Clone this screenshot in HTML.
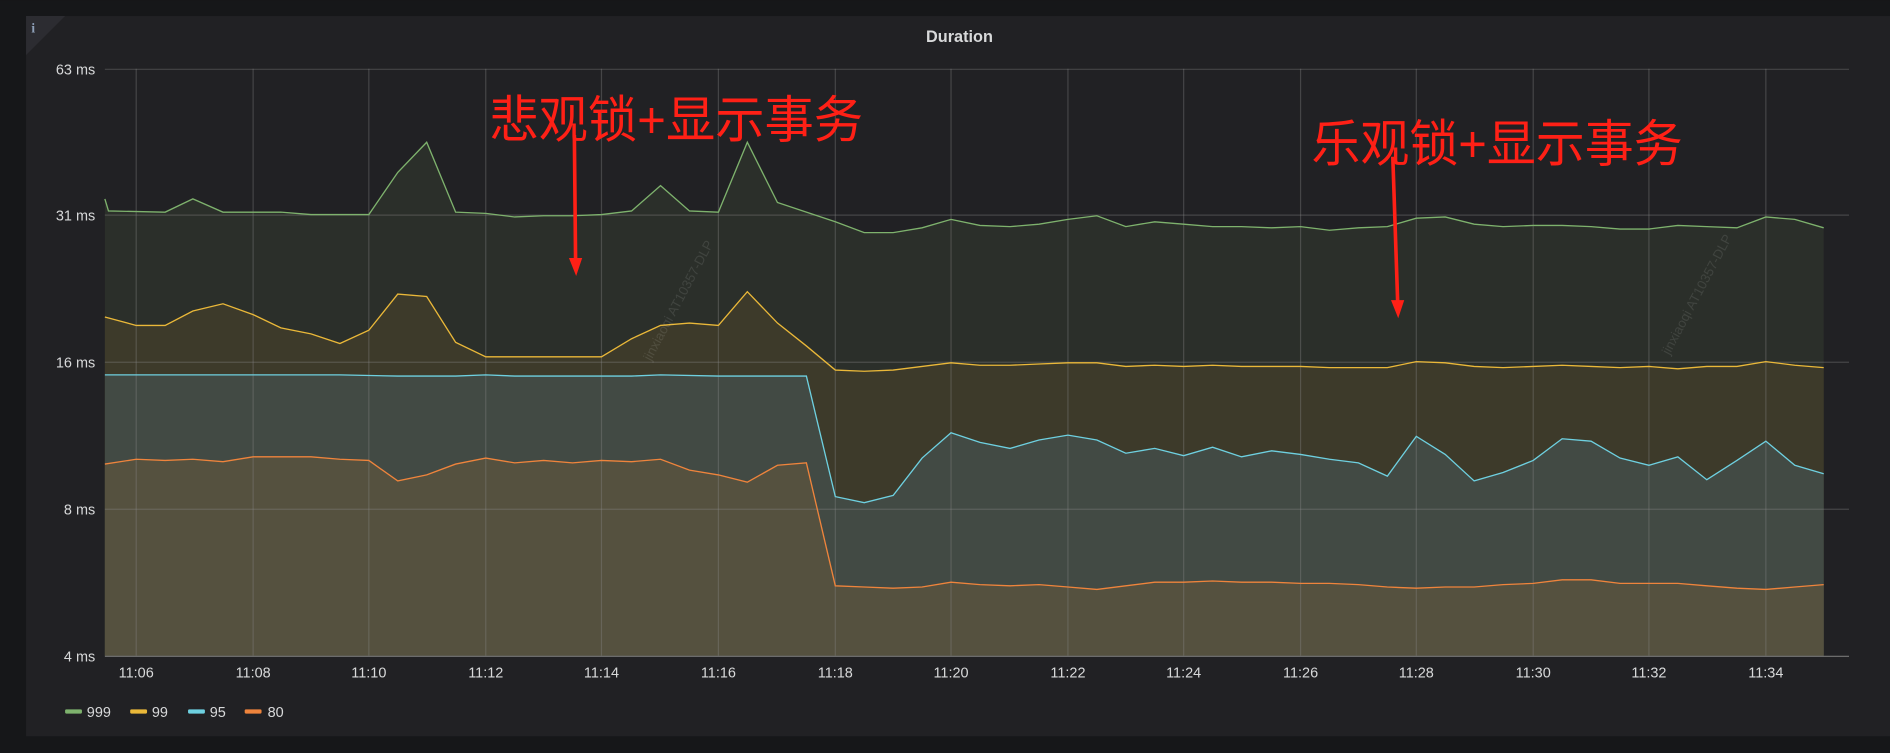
<!DOCTYPE html>
<html><head><meta charset="utf-8"><style>
html,body{margin:0;padding:0;background:#161719;width:1890px;height:753px;overflow:hidden}
svg{display:block}
</style></head><body>
<svg width="1890" height="753" viewBox="0 0 1568 624.7" xmlns="http://www.w3.org/2000/svg" font-family="'Liberation Sans', sans-serif">
<rect x="0" y="0" width="1568" height="625" fill="#161719"/>
<rect x="21.6" y="13.3" width="1560" height="597.5" fill="#212124"/>
<polygon points="21.6,13.3 54,13.3 21.6,45.6" fill="#2c2c31"/>
<text x="26" y="27" font-size="11" fill="#8ea0b8" font-family="'Liberation Serif',serif" font-weight="bold">i</text>
<text x="796" y="35" font-size="13.5" fill="#d8d9da" text-anchor="middle" font-weight="bold">Duration</text>

<!-- fills -->
<g>
<polygon fill="#2b2f2a" points="87,544 87,165 90,175 137,176 160,165 185,176 233,176 258,178 306,178 330,143 354,118 378,176 403,177 427,180 451,179 475,179 499,178 524,175 548,154 572,175 596,176 620,118 645,168 669,176 693,184 717,193 741,193 765,189 789,182 813,187 838,188 862,186 886,182 910,179 934,188 958,184 982,186 1006,188 1030,188 1055,189 1079,188 1103,191 1127,189 1151,188 1175,181 1199,180 1223,186 1247,188 1272,187 1296,187 1320,188 1344,190 1368,190 1392,187 1416,188 1441,189 1465,180 1489,182 1513,189 1513,544"/>
<polygon fill="#3d3a2a" points="87,544 87,263 113,270 137,270 160,258 185,252 210,261 233,272 258,277 282,285 306,274 330,244 354,246 378,284 403,296 427,296 451,296 475,296 499,296 524,281 548,270 572,268 596,270 620,242 645,268 669,287 693,307 717,308 741,307 765,304 789,301 813,303 838,303 862,302 886,301 910,301 934,304 958,303 982,304 1006,303 1030,304 1055,304 1079,304 1103,305 1127,305 1151,305 1175,300 1199,301 1223,304 1247,305 1272,304 1296,303 1320,304 1344,305 1368,304 1392,306 1416,304 1441,304 1465,300 1489,303 1513,305 1513,544"/>
<polygon fill="#424a44" points="87,544 87,311 137,311 185,311 233,311 282,311 330,312 378,312 403,311 427,312 475,312 524,312 548,311 596,312 645,312 669,312 693,412 717,417 741,411 765,380 789,359 813,367 838,372 862,365 886,361 910,365 934,376 958,372 982,378 1006,371 1030,379 1055,374 1079,377 1103,381 1127,384 1151,395 1175,362 1199,377 1223,399 1247,392 1272,382 1296,364 1320,366 1344,380 1368,386 1392,379 1416,398 1441,382 1465,366 1489,386 1513,393 1513,544"/>
<polygon fill="#55513f" points="87,544 87,385 113,381 137,382 160,381 185,383 210,379 233,379 258,379 282,381 306,382 330,399 354,394 378,385 403,380 427,384 451,382 475,384 499,382 524,383 548,381 572,390 596,394 620,400 645,386 669,384 693,486 717,487 741,488 765,487 789,483 813,485 838,486 862,485 886,487 910,489 934,486 958,483 982,483 1006,482 1030,483 1055,483 1079,484 1103,484 1127,485 1151,487 1175,488 1199,487 1223,487 1247,485 1272,484 1296,481 1320,481 1344,484 1368,484 1392,484 1416,486 1441,488 1465,489 1489,487 1513,485 1513,544"/>
</g>

<!-- grid -->
<g stroke="#8a8a8a" stroke-opacity="0.35" stroke-width="1">
<line x1="87" y1="57.5" x2="1534" y2="57.5"/>
<line x1="87" y1="178.5" x2="1534" y2="178.5"/>
<line x1="87" y1="300.5" x2="1534" y2="300.5"/>
<line x1="87" y1="422.5" x2="1534" y2="422.5"/>
<line x1="113" y1="57" x2="113" y2="544"/><line x1="210" y1="57" x2="210" y2="544"/>
<line x1="306" y1="57" x2="306" y2="544"/><line x1="403" y1="57" x2="403" y2="544"/>
<line x1="499" y1="57" x2="499" y2="544"/><line x1="596" y1="57" x2="596" y2="544"/>
<line x1="693" y1="57" x2="693" y2="544"/><line x1="789" y1="57" x2="789" y2="544"/>
<line x1="886" y1="57" x2="886" y2="544"/><line x1="982" y1="57" x2="982" y2="544"/>
<line x1="1079" y1="57" x2="1079" y2="544"/><line x1="1175" y1="57" x2="1175" y2="544"/>
<line x1="1272" y1="57" x2="1272" y2="544"/><line x1="1368" y1="57" x2="1368" y2="544"/>
<line x1="1465" y1="57" x2="1465" y2="544"/>
</g>
<line x1="87" y1="544.5" x2="1534" y2="544.5" stroke="#777" stroke-width="1"/>

<!-- lines -->
<g fill="none" stroke-width="1.1">
<polyline stroke="#7eb26d" points="87,165 90,175 137,176 160,165 185,176 233,176 258,178 306,178 330,143 354,118 378,176 403,177 427,180 451,179 475,179 499,178 524,175 548,154 572,175 596,176 620,118 645,168 669,176 693,184 717,193 741,193 765,189 789,182 813,187 838,188 862,186 886,182 910,179 934,188 958,184 982,186 1006,188 1030,188 1055,189 1079,188 1103,191 1127,189 1151,188 1175,181 1199,180 1223,186 1247,188 1272,187 1296,187 1320,188 1344,190 1368,190 1392,187 1416,188 1441,189 1465,180 1489,182 1513,189"/>
<polyline stroke="#eab839" points="87,263 113,270 137,270 160,258 185,252 210,261 233,272 258,277 282,285 306,274 330,244 354,246 378,284 403,296 427,296 451,296 475,296 499,296 524,281 548,270 572,268 596,270 620,242 645,268 669,287 693,307 717,308 741,307 765,304 789,301 813,303 838,303 862,302 886,301 910,301 934,304 958,303 982,304 1006,303 1030,304 1055,304 1079,304 1103,305 1127,305 1151,305 1175,300 1199,301 1223,304 1247,305 1272,304 1296,303 1320,304 1344,305 1368,304 1392,306 1416,304 1441,304 1465,300 1489,303 1513,305"/>
<polyline stroke="#6ed0e0" points="87,311 137,311 185,311 233,311 282,311 330,312 378,312 403,311 427,312 475,312 524,312 548,311 596,312 645,312 669,312 693,412 717,417 741,411 765,380 789,359 813,367 838,372 862,365 886,361 910,365 934,376 958,372 982,378 1006,371 1030,379 1055,374 1079,377 1103,381 1127,384 1151,395 1175,362 1199,377 1223,399 1247,392 1272,382 1296,364 1320,366 1344,380 1368,386 1392,379 1416,398 1441,382 1465,366 1489,386 1513,393"/>
<polyline stroke="#ef843c" points="87,385 113,381 137,382 160,381 185,383 210,379 233,379 258,379 282,381 306,382 330,399 354,394 378,385 403,380 427,384 451,382 475,384 499,382 524,383 548,381 572,390 596,394 620,400 645,386 669,384 693,486 717,487 741,488 765,487 789,483 813,485 838,486 862,485 886,487 910,489 934,486 958,483 982,483 1006,482 1030,483 1055,483 1079,484 1103,484 1127,485 1151,487 1175,488 1199,487 1223,487 1247,485 1272,484 1296,481 1320,481 1344,484 1368,484 1392,484 1416,486 1441,488 1465,489 1489,487 1513,485"/>
</g>

<!-- watermarks -->
<g fill="#ffffff" fill-opacity="0.1" font-size="11">
<text transform="translate(540,300) rotate(-62)">jinxiaoqi  AT10357-DLP</text>
<text transform="translate(1385,295) rotate(-62)">jinxiaoqi  AT10357-DLP</text>
</g>

<!-- y labels -->
<g fill="#d8d9da" font-size="12" text-anchor="end">
<text x="79" y="62">63 ms</text>
<text x="79" y="183">31 ms</text>
<text x="79" y="305">16 ms</text>
<text x="79" y="427">8 ms</text>
<text x="79" y="549">4 ms</text>
</g>
<g fill="#d8d9da" font-size="12" text-anchor="middle">
<text x="113" y="562">11:06</text><text x="210" y="562">11:08</text><text x="306" y="562">11:10</text>
<text x="403" y="562">11:12</text><text x="499" y="562">11:14</text><text x="596" y="562">11:16</text>
<text x="693" y="562">11:18</text><text x="789" y="562">11:20</text><text x="886" y="562">11:22</text>
<text x="982" y="562">11:24</text><text x="1079" y="562">11:26</text><text x="1175" y="562">11:28</text>
<text x="1272" y="562">11:30</text><text x="1368" y="562">11:32</text><text x="1465" y="562">11:34</text>
</g>

<!-- legend -->
<g font-size="12" fill="#d8d9da">
<rect x="54" y="588.5" width="14" height="3.5" rx="1" fill="#7eb26d"/><text x="72" y="595">999</text>
<rect x="108" y="588.5" width="14" height="3.5" rx="1" fill="#eab839"/><text x="126" y="595">99</text>
<rect x="156" y="588.5" width="14" height="3.5" rx="1" fill="#6ed0e0"/><text x="174" y="595">95</text>
<rect x="203" y="588.5" width="14" height="3.5" rx="1" fill="#ef843c"/><text x="222" y="595">80</text>
</g>

<!-- annotations -->
<g fill="#ff2016" font-family="'Liberation Sans','Noto Sans CJK SC',sans-serif" font-size="42">
<text x="406" y="114" textLength="310" lengthAdjust="spacingAndGlyphs">悲观锁+显示事务</text>
<text x="1088" y="134" textLength="308" lengthAdjust="spacingAndGlyphs">乐观锁+显示事务</text>
</g>
<g fill="#ff2016">
<polygon points="475,112 478,112 479,214 483,214 478,229 472,214 476,214"/>
<polygon points="1154,130 1157,130 1161,249 1165,249 1160,264 1154,249 1158,249"/>
</g>
</svg>
</body></html>
